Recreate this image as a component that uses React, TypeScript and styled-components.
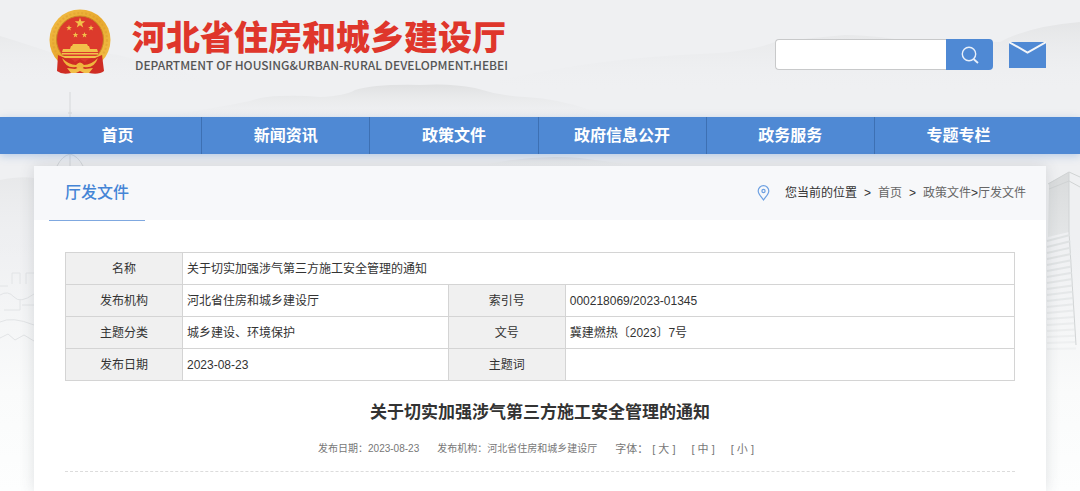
import React from 'react';
import styled, { createGlobalStyle } from 'styled-components';

const blue = '#4f89d4';

const Global = createGlobalStyle`
  * { box-sizing: border-box; }
  body {
    margin: 0;
    background: #fff;
    color: #333;
    font: 12px/20px "Liberation Sans", "Noto Sans CJK SC", sans-serif;
  }
  a { color: inherit; text-decoration: none; }
`;

const Page = styled.div`
  position: relative;
  min-height: 100vh;
  display: flex;
  flex-direction: column;
  overflow: hidden;
`;

const Scenery = styled.svg`
  position: absolute;
  inset: 0;
  width: 100%;
  height: 491px;
  z-index: -1;
`;

const Header = styled.header`
  display: flex;
  justify-content: space-between;
  height: 117px;
  padding: 0 34px 0 48px;
`;

const Brand = styled.a`
  display: flex;
  align-items: flex-start;
  gap: 20px;
  padding-top: 8px;
`;

const BrandText = styled.div`
  display: flex;
  flex-direction: column;
  padding-top: 6px;
`;

const BrandName = styled.h1`
  margin: 0;
  color: #df362b;
  font: 900 34px/44px "Noto Sans CJK SC", sans-serif;
`;

const BrandLatin = styled.span`
  padding-left: 3px;
  color: #555;
  font: 500 12px/14px "Noto Sans CJK SC", sans-serif;
`;

const Tools = styled.div`
  display: flex;
  align-items: flex-start;
  gap: 16px;
  padding-top: 39px;
`;

const Search = styled.form`
  display: flex;
  height: 31px;
`;

const SearchBox = styled.input`
  width: 171px;
  padding: 0 8px;
  border: 1px solid #c8c9ca;
  border-right: 0;
  border-radius: 4px 0 0 4px;
  background: #fff;
  font: inherit;
  outline: none;
`;

const SearchButton = styled.button`
  display: grid;
  place-items: center;
  width: 47px;
  padding: 0;
  border: 0;
  border-radius: 0 4px 4px 0;
  background: ${blue};
  cursor: pointer;
`;

const MailLink = styled.a`
  display: block;
  height: 29px;
`;

const Nav = styled.nav`
  display: flex;
  height: 37px;
  padding: 0 38px 0 34px;
  background: ${blue};
  box-shadow: 0 2px 8px rgba(79, 137, 212, 0.35);
`;

const NavItem = styled.a`
  flex: 1;
  border-right: 1px solid #3d70b3;
  color: #fff;
  font: 700 16px/34px "Noto Sans CJK SC", sans-serif;
  text-align: center;
  &:last-child { border-right: 0; }
`;

const Card = styled.main`
  flex: 1;
  margin: 12px 34px 0;
  background: #fff;
  box-shadow: 0 0 14px rgba(60, 70, 80, 0.16);
`;

const CardHead = styled.div`
  display: flex;
  justify-content: space-between;
  height: 54px;
  padding: 0 20px 0 15px;
  background: #f7f8fa;
`;

const Section = styled.h2`
  height: 55px;
  margin: 0;
  padding: 0 16px;
  border-bottom: 1px solid #7fa8e0;
  color: #4585d6;
  font: 500 16px/51px "Noto Sans CJK SC", sans-serif;
`;

const Crumbs = styled.div`
  display: flex;
  align-items: center;
  gap: 7px;
  color: #666;
  span { color: #333; }
  svg { margin-right: 8px; }
`;

const Body = styled.div`
  padding: 32px 31px 20px;
`;

const Info = styled.table`
  width: 100%;
  border-collapse: collapse;
  table-layout: fixed;
  th, td {
    height: 32px;
    padding: 0 4px;
    border: 1px solid #d4d4d4;
    font-weight: 400;
    text-align: left;
  }
  th {
    background: #f0f0f0;
    text-align: center;
  }
`;

const Col = styled.col<{ $w?: string }>`
  width: ${(p) => p.$w ?? 'auto'};
`;

const Title = styled.h3`
  margin: 17px 0 0;
  font: 700 17px/26px "Noto Sans CJK SC", sans-serif;
  text-align: center;
`;

const Meta = styled.div`
  display: flex;
  justify-content: center;
  gap: 18px;
  margin-top: 15px;
  padding: 0 8px 12px 0;
  border-bottom: 1px dashed #dcdcdc;
  color: #777;
  font-size: 10px;
`;

const FontSizes = styled.span`
  display: flex;
  gap: 16px;
  font-size: 11px;
`;

const SizeLabel = styled.span`
  margin-right: -12px;
`;

const SizeButton = styled.button`
  padding: 0;
  border: 0;
  background: none;
  color: inherit;
  font: inherit;
  cursor: pointer;
`;

const star = (x: number, y: number, r: number) =>
  Array.from({ length: 10 }, (_, i) => {
    const a = (Math.PI * i) / 5 - Math.PI / 2;
    const k = i % 2 ? r * 0.4 : r;
    return `${x + k * Math.cos(a)},${y + k * Math.sin(a)}`;
  }).join(' ');

const Emblem = () => (
  <svg width="64" height="68" viewBox="0 0 64 68" aria-hidden="true">
    <defs>
      <linearGradient id="gold" x1="0" y1="0" x2="1" y2="1">
        <stop offset="0" stopColor="#f2bd45" />
        <stop offset="0.5" stopColor="#e8a92f" />
        <stop offset="1" stopColor="#f3c24c" />
      </linearGradient>
    </defs>
    <circle cx="32" cy="32" r="30.500" fill="url(#gold)" />
    <circle cx="32" cy="32" r="27" fill="none" stroke="#d9962a" strokeWidth="2" strokeDasharray="2 2" opacity="0.4" />
    <circle cx="32" cy="31.500" r="23.500" fill="#dc3a2c" stroke="#c98b25" />
    <g fill="#f2c14a">
      <polygon points={star(32, 15, 5.5)} />
      <polygon points={star(21, 20, 3)} />
      <polygon points={star(43, 20, 3)} />
      <polygon points={star(27.5, 27, 3)} />
      <polygon points={star(36.5, 27, 3)} />
      <path d="M25 36H39L40 38H41L42 41H49L50 44H14L15 41H22L23 38H24Z" />
      <path d="M14 45H50V46.500H14ZM12 48H52L50 50H14Z" />
    </g>
    <path d="M10 47L17 50Q24 50 27 54L32 51L37 54Q40 50 47 50L54 47L56 63Q51 67 41 65H23Q14 67 9 63Z" fill="#cf2d24" />
    <path d="M14 50Q21 57 28 57Q32 52 36 57Q43 57 50 50Q46 61 36 59Q32 63 28 59Q18 61 14 50Z" fill="#efb63d" />
    <path d="M19 60L27 61Q32 58 37 61L45 60L41 65H36L32 63L28 65H23Z" fill="#f1be48" />
  </svg>
);

const stripes = Array.from({ length: 19 }, (_, i) => i);

const sizes = ['大', '中', '小'];
const navItems = ['首页', '新闻资讯', '政策文件', '政府信息公开', '政务服务', '专题专栏'];
const rows = [
  ['发布机构', '河北省住房和城乡建设厅', '索引号', '000218069/2023-01345'],
  ['主题分类', '城乡建设、环境保护', '文号', '冀建燃热〔2023〕7号'],
  ['发布日期', '2023-08-23', '主题词', ''],
];

export default function App() {
  return (
    <Page>
      <Global />
      <Scenery viewBox="0 0 1080 491" preserveAspectRatio="none" aria-hidden="true">
        <defs>
          <linearGradient id="sky" x1="0" y1="0" x2="0" y2="1">
            <stop offset="0" stopColor="#eff0f2" />
            <stop offset="0.5" stopColor="#eff0f2" />
            <stop offset="0.8" stopColor="#fafbfb" />
            <stop offset="1" stopColor="#fdfefe" />
          </linearGradient>
          <linearGradient id="hill" x1="0" y1="0" x2="0" y2="1">
            <stop offset="0" stopColor="#e0e1e2" />
            <stop offset="1" stopColor="#eeeff1" stopOpacity="0" />
          </linearGradient>
          <linearGradient id="tower" x1="0" y1="0" x2="0" y2="1">
            <stop offset="0" stopColor="#d9dbdc" />
            <stop offset="1" stopColor="#e4e6e7" />
          </linearGradient>
        </defs>
        <rect width="1080" height="491" fill="url(#sky)" />
        <g fill="url(#hill)">
          <path d="M0 36Q20 42 50 52Q90 47 130 58L200 76V84H0Z" opacity="0.4" />
          <path d="M160 117Q215 108 250 101Q265 96 280 96Q300 95 320 97Q345 96 355 90Q375 84 420 85Q450 83 475 88Q500 96 525 97Q560 99 590 110L640 120H160Z" />
          <path d="M500 80Q600 58 700 54Q750 52 775 42Q810 38 845 35Q885 36 910 42L1000 42Q1030 26 1080 22V90H500Z" opacity="0.7" />
          <path d="M0 180Q20 176 34 178V260H0Z" opacity="0.5" />
          <path d="M480 166Q530 154 580 158L640 166Z" />
        </g>
        <path d="M70 92V166M68 113H72M70 154Q62 156 57 166M70 154Q78 156 83 166" stroke="#d6d8da" fill="none" />
        <path d="M12 284V273H20V284M26 284V273H34M0 286H8M0 295Q8 290 14 297T34 294M4 310H20V300M22 305H34M0 322Q12 316 34 325M0 338L8 334L15 340L24 335L34 341" stroke="#e2e4e6" fill="none" />
        <path d="M1049 183L1069 172V232L1048 237Z" fill="url(#tower)" />
        <path d="M1048 184L1069 172L1080 177M1069 172V232L1076 345M1049 189L1069 181L1080 187" stroke="#d0d3d4" fill="none" />
        <g stroke="#dfe2e3" strokeWidth="2">
          {stripes.map((i) => (
            <path key={i} d={`M1047 ${241 + i * 6}L${1070 + i / 3} ${235 + i * 6.3}`} opacity={1 - i * 0.04} />
          ))}
        </g>
      </Scenery>
      <Header>
        <Brand href="#">
          <Emblem />
          <BrandText>
            <BrandName>河北省住房和城乡建设厅</BrandName>
            <BrandLatin>DEPARTMENT OF HOUSING&amp;URBAN-RURAL DEVELOPMENT.HEBEI</BrandLatin>
          </BrandText>
        </Brand>
        <Tools>
          <Search>
            <SearchBox type="text" aria-label="搜索" />
            <SearchButton type="button" aria-label="搜索">
              <svg width="18" height="18" viewBox="0 0 18 18" fill="none" stroke="#e9f0fa" strokeWidth="1.400">
                <circle cx="8" cy="8" r="6.700" />
                <path d="M12.500 13L17 17" strokeWidth="1.800" />
              </svg>
            </SearchButton>
          </Search>
          <MailLink href="#" aria-label="邮箱">
            <svg width="37" height="29" viewBox="0 0 37 29">
              <rect y="3" width="37" height="26" fill={blue} />
              <path d="M0 3L18.500 13.500L37 3" fill="none" stroke="#f2f5f9" strokeWidth="2" />
            </svg>
          </MailLink>
        </Tools>
      </Header>
      <Nav>
        {navItems.map((t) => (
          <NavItem href="#" key={t}>{t}</NavItem>
        ))}
      </Nav>
      <Card>
        <CardHead>
          <Section>厅发文件</Section>
          <Crumbs>
            <svg width="13" height="16" viewBox="0 0 13 16" fill="none" stroke="#6da0e2" strokeWidth="1.200">
              <path d="M6.500 15C4 11.500 1.200 9 1.200 6A5.300 5.300 0 0 1 11.800 6C11.800 9 9 11.500 6.500 15Z" />
              <circle cx="6.500" cy="6" r="1.600" />
            </svg>
            <span>您当前的位置</span>
            <span>&gt;</span>
            <a href="#">首页</a>
            <span>&gt;</span>
            <div>
              <a href="#">政策文件</a>
              <span>&gt;</span>
              <a href="#">厅发文件</a>
            </div>
          </Crumbs>
        </CardHead>
        <Body>
          <Info>
            <colgroup>
              <Col $w="117px" />
              <Col $w="28%" />
              <Col $w="117px" />
              <Col />
            </colgroup>
            <tbody>
              <tr>
                <th scope="row">名称</th>
                <td colSpan={3}>关于切实加强涉气第三方施工安全管理的通知</td>
              </tr>
              {rows.map(([a, b, c, d]) => (
                <tr key={a}>
                  <th scope="row">{a}</th>
                  <td>{b}</td>
                  <th scope="row">{c}</th>
                  <td>{d}</td>
                </tr>
              ))}
            </tbody>
          </Info>
          <Title>关于切实加强涉气第三方施工安全管理的通知</Title>
          <Meta>
            <span>发布日期：2023-08-23</span>
            <span>发布机构：河北省住房和城乡建设厅</span>
            <FontSizes>
              <SizeLabel>字体：</SizeLabel>
              {sizes.map((s) => (
                <SizeButton type="button" key={s}>[ {s} ]</SizeButton>
              ))}
            </FontSizes>
          </Meta>
        </Body>
      </Card>
    </Page>
  );
}
